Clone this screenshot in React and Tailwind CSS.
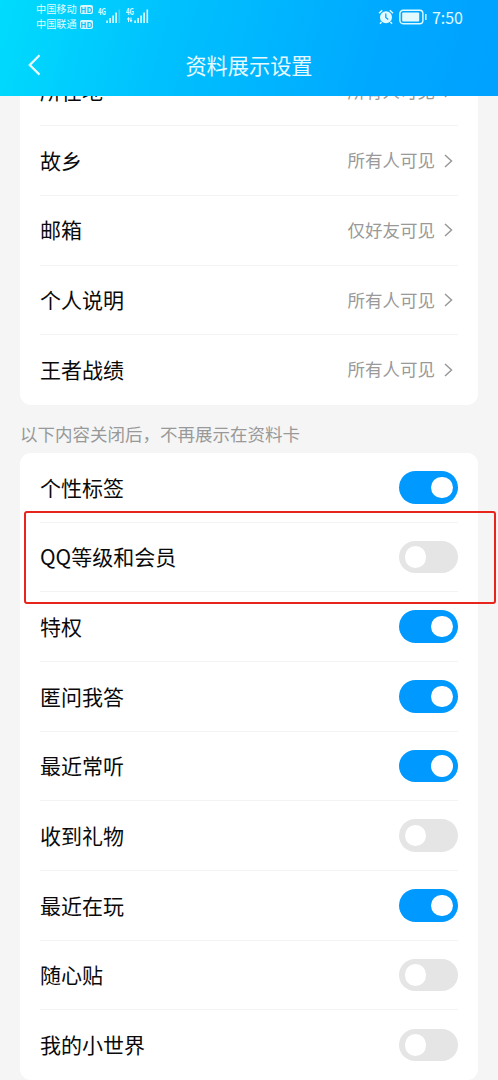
import clsx from 'clsx';

const visibilityRows = [
  { label: '所在地', value: '所有人可见' },
  { label: '故乡', value: '所有人可见' },
  { label: '邮箱', value: '仅好友可见' },
  { label: '个人说明', value: '所有人可见' },
  { label: '王者战绩', value: '所有人可见' },
];

const toggleRows = [
  { label: '个性标签', on: true },
  { label: 'QQ等级和会员', on: false, highlighted: true },
  { label: '特权', on: true },
  { label: '匿问我答', on: true },
  { label: '最近常听', on: true },
  { label: '收到礼物', on: false },
  { label: '最近在玩', on: true },
  { label: '随心贴', on: false },
  { label: '我的小世界', on: false },
];

function Carrier({ name }) {
  return (
    <div className="flex h-[15px] items-center gap-[3px]">
      <span className="text-[10.2px] leading-none">{name}</span>
      <span className="flex h-[9px] w-[13px] items-center justify-center rounded-[2px] bg-[#d5f7ff] text-[8px] leading-none font-bold text-[#00c3fd]">
        HD
      </span>
    </div>
  );
}

function Signal({ data }) {
  return (
    <svg width="24" height="16" viewBox="0 0 24 16" fill="currentColor">
      <text x="0" y="7.2" fontSize="8.5" fontWeight="700" textLength="8" lengthAdjust="spacingAndGlyphs">4G</text>
      {data && <path d="M2.5 9 4.5 11.5H3V14H2V11.5H.7ZM5 14.5 3.5 12H4.5V9.5h1V12H6.5Z" />}
      <path d="M8.3 12.5h1.6V15H8.3zM11.3 10h1.6v5h-1.6zM14.3 7.5h1.6V15h-1.6zM17.3 4.5h1.6V15h-1.6z" />
      <path d="M20.5 1.5h1.6V15h-1.6z" opacity={data ? 1 : 0.3} />
    </svg>
  );
}

function StatusBar() {
  return (
    <div className="flex h-[34px] items-start justify-between pr-[35px] pl-9 text-[#e0faff]">
      <div className="flex pt-[2px]">
        <div>
          <Carrier name="中国移动" />
          <Carrier name="中国联通" />
        </div>
        <div className="flex gap-1 pt-[6px] pl-[5px]">
          <Signal />
          <Signal data />
        </div>
      </div>
      <div className="flex h-[34px] items-center">
        <svg width="16" height="16" viewBox="0 0 16 16" fill="none">
          <circle cx="8" cy="8.2" r="6" fill="currentColor" />
          <path d="M1 4.3 4.2 1.2M15 4.3 11.8 1.2M3.5 13 2 14.8M12.5 13l1.5 1.8" stroke="currentColor" strokeWidth="1.4" />
          <path d="M7.8 4.5v4l2.5 2" stroke="#00a8ff" strokeWidth="1.3" />
        </svg>
        <svg className="ml-[5px]" width="28" height="16" viewBox="0 0 28 16" fill="none">
          <rect x=".9" y="1.2" width="23" height="13.5" rx="3.2" stroke="currentColor" strokeWidth="1.4" />
          <rect x="3.2" y="3.5" width="17" height="9" rx="1" fill="currentColor" />
          <path d="M26.8 5v6" stroke="currentColor" strokeWidth="1.5" />
        </svg>
        <span className="ml-[5px] text-[16px] leading-none">7:50</span>
      </div>
    </div>
  );
}

function Header() {
  return (
    <header className="relative z-10 h-[95.5px] shrink-0 bg-[linear-gradient(105deg,#00dcfd_0%,#00c2fe_32%,#00a9ff_75%,#00a1ff_100%)]">
      <StatusBar />
      <div className="grid h-[62px] grid-cols-[1fr_auto_1fr] items-center text-[#e6faff]">
        <svg className="ml-7" width="13" height="22" viewBox="0 0 13 22" fill="none" stroke="currentColor" strokeWidth="2.3">
          <path d="M11.5 1.2 1.8 11l9.7 9.6" />
        </svg>
        <h1 className="text-[21.2px]">资料展示设置</h1>
      </div>
    </header>
  );
}

function Toggle({ on }) {
  return (
    <button
      type="button"
      role="switch"
      aria-checked={on}
      className={clsx(
        'flex h-[32.5px] w-[59px] items-center rounded-full px-[5.5px]',
        on ? 'justify-end bg-[#0099ff]' : 'bg-[#e5e5e5]'
      )}
    >
      <span className="h-[21.5px] w-[21.5px] rounded-full bg-white" />
    </button>
  );
}

function Row({ label, last, children }) {
  return (
    <div
      className={clsx(
        'flex h-[69.7px] items-center justify-between border-b',
        last ? 'border-transparent' : 'border-[#f3f3f3]'
      )}
    >
      <span className="text-[21px] text-[#0a0a0a]">{label}</span>
      {children}
    </div>
  );
}

export default function App() {
  return (
    <div className="flex h-[1080px] w-[498px] flex-col overflow-hidden bg-[#f5f5f5] font-['Noto_Sans_CJK_SC',sans-serif]">
      <Header />
      <main className="-mt-[39px] shrink-0 px-5">
        <section className="rounded-[11px] bg-white px-5">
          {visibilityRows.map((row, index) => (
            <Row key={row.label} label={row.label} last={index === visibilityRows.length - 1}>
              <div className="flex items-center gap-[9px] pr-[5px] text-[#999]">
                <span className="text-[17.5px]">{row.value}</span>
                <svg width="9" height="14" viewBox="0 0 9 14" fill="none" stroke="currentColor" strokeWidth="1.5">
                  <path d="M1 1l6.5 6L1 13" />
                </svg>
              </div>
            </Row>
          ))}
        </section>

        <p className="flex h-12 items-center pt-[10px] text-[17.5px] text-[#999]">
          以下内容关闭后，不再展示在资料卡
        </p>

        <section className="rounded-[11px] bg-white px-5">
          {toggleRows.map((row, index) => (
            <div key={row.label} className="relative">
              <Row label={row.label} last={index === toggleRows.length - 1}>
                <Toggle on={row.on} />
              </Row>
              {row.highlighted && (
                <div className="pointer-events-none absolute -top-[12px] -right-[38px] -left-4 h-[93px] rounded-[3px] border-[2.5px] border-[#e8251d]" />
              )}
            </div>
          ))}
        </section>
      </main>
    </div>
  );
}
